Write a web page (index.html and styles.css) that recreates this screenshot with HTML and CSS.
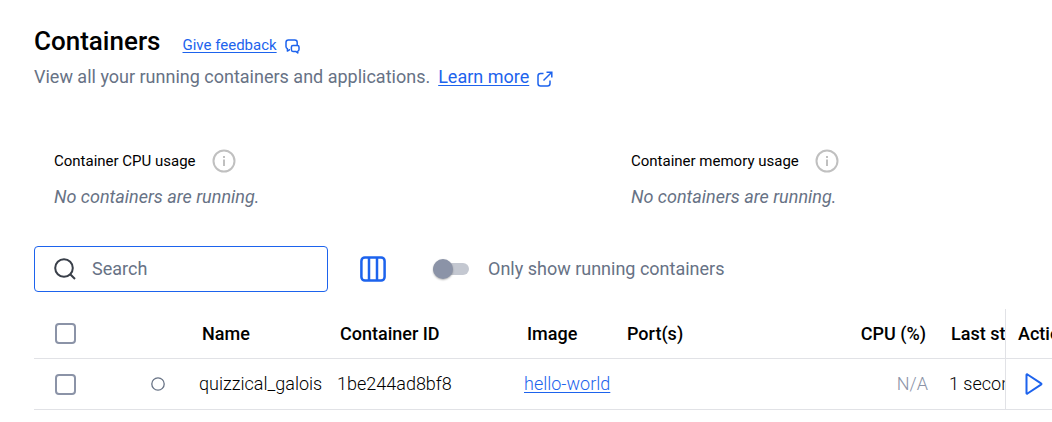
FILE: index.html
```html
<!DOCTYPE html>
<html lang="en">
<head>
  <meta charset="UTF-8">
  <title>Containers</title>
  <link rel="stylesheet" href="styles.css">
</head>
<body>

  <header class="page-header">
    <div class="title-row">
      <h1>Containers</h1>
      <a href="#" class="feedback">Give feedback</a>
      <svg class="feedback-icon" width="15" height="15" viewBox="0 0 15 15" fill="none" stroke="currentColor" stroke-width="1.5" stroke-linejoin="round">
        <path d="M5 10.8 H4.4 L2.4 12 V9.6 Q1 9 1 7.4 V3.4 Q1 1 3.4 1 H9.8 Q12.2 1 12.2 3.4 V6"/>
        <path d="M8 6.4 H12.4 Q14 6.4 14 8 V10.6 Q14 12 12.8 12.2 V14 L10.8 12.4 H8 Q6.4 12.4 6.4 10.8 V8 Q6.4 6.4 8 6.4 Z"/>
      </svg>
    </div>
    <p class="subtitle">
      View all your running containers and applications.
      <a href="#">Learn more</a>
      <svg class="external-icon" width="16" height="16" viewBox="0 0 16 16" fill="none" stroke="currentColor" stroke-width="1.5">
        <path d="M6.5 2.5 H3.5 Q1 2.5 1 5 V12.5 Q1 15 3.5 15 H10.5 Q13 15 13 12.5 V9.5"/>
        <path d="M6.5 9.5 L14.5 1.5 M9.5 1.2 H14.8 V6.5"/>
      </svg>
    </p>
  </header>

  <section class="usage">
    <div class="usage-item">
      <h2>Container CPU usage
        <svg width="24" height="24" viewBox="0 0 24 24" fill="none" stroke="currentColor" stroke-width="2">
          <circle cx="12" cy="12" r="10.5"/>
          <path d="M12 10.5 V17 M12 7 V9"/>
        </svg>
      </h2>
      <p>No containers are running.</p>
    </div>
    <div class="usage-item">
      <h2>Container memory usage
        <svg width="24" height="24" viewBox="0 0 24 24" fill="none" stroke="currentColor" stroke-width="2">
          <circle cx="12" cy="12" r="10.5"/>
          <path d="M12 10.5 V17 M12 7 V9"/>
        </svg>
      </h2>
      <p>No containers are running.</p>
    </div>
  </section>

  <div class="toolbar">
    <label class="search">
      <svg width="22" height="22" viewBox="0 0 22 22" fill="none" stroke="currentColor" stroke-width="2">
        <circle cx="10" cy="10" r="8.8"/>
        <path d="M16.2 16.2 L21 21"/>
      </svg>
      <input type="text" placeholder="Search" aria-label="Search">
    </label>
    <button class="columns-button" aria-label="Choose columns">
      <svg width="26" height="26" viewBox="0 0 26 26" fill="none" stroke="currentColor" stroke-width="2.5">
        <rect x="1.4" y="1.4" width="23.2" height="23.2" rx="3.5"/>
        <path d="M9 1.4 V24.6 M17 1.4 V24.6"/>
      </svg>
    </button>
    <label class="toggle">
      <input type="checkbox" role="switch">
      Only show running containers
    </label>
  </div>

  <div class="table-wrap">
    <table>
      <colgroup>
        <col class="col-check">
        <col class="col-status">
        <col class="col-name">
        <col class="col-id">
        <col class="col-image">
        <col class="col-ports">
        <col class="col-cpu">
        <col class="col-started">
        <col class="col-actions">
      </colgroup>
      <thead>
        <tr>
          <th class="check"><input type="checkbox" aria-label="Select all containers"></th>
          <th></th>
          <th>Name</th>
          <th>Container ID</th>
          <th>Image</th>
          <th>Port(s)</th>
          <th class="number">CPU (%)</th>
          <th class="started">Last started</th>
          <th class="actions">Actions</th>
        </tr>
      </thead>
      <tbody>
        <tr>
          <td class="check"><input type="checkbox" aria-label="Select quizzical_galois"></td>
          <td class="status">
            <svg width="14" height="14" viewBox="0 0 14 14" fill="none" stroke="currentColor" stroke-width="1.3">
              <circle cx="7" cy="7" r="6.2"/>
            </svg>
          </td>
          <td>quizzical_galois</td>
          <td>1be244ad8bf8</td>
          <td><a href="#">hello-world</a></td>
          <td></td>
          <td class="number muted">N/A</td>
          <td class="started">1 second ago</td>
          <td class="actions">
            <button aria-label="Start">
              <svg width="18" height="22" viewBox="0 0 18 22" fill="none" stroke="currentColor" stroke-width="2" stroke-linejoin="round">
                <path d="M1.5 2 Q1.5 1 2.5 1.5 L16 10.4 Q17 11 16 11.6 L2.5 20.5 Q1.5 21 1.5 20 Z"/>
              </svg>
            </button>
          </td>
        </tr>
      </tbody>
    </table>
  </div>

</body>
</html>
```
FILE: styles.css
```css
* {
  box-sizing: border-box;
}

body {
  margin: 0;
  padding: 24px 0 12px 34px;
  font-family: Roboto, Arial, sans-serif;
  font-size: 18px;
  line-height: 24px;
  color: #000;
  background-color: #fff;
  overflow-x: hidden;
}

h1, h2, p {
  margin: 0;
}

a {
  color: #1d63ed;
  text-underline-offset: 2px;
  text-decoration-thickness: 1px;
}

button {
  padding: 0;
  border: none;
  background: none;
  color: #1d63ed;
  cursor: pointer;
}

svg {
  display: block;
}

.title-row {
  display: flex;
  align-items: baseline;
}

h1 {
  margin-right: 22px;
  font-size: 26px;
  font-weight: 500;
  line-height: 34px;
}

.feedback {
  margin-right: 8px;
  font-size: 15px;
}

.feedback-icon {
  align-self: center;
  margin-top: 10px;
  color: #1d63ed;
}

.subtitle {
  display: flex;
  align-items: center;
  gap: 8px;
  margin-top: 7px;
  color: #677285;
}

.external-icon {
  margin-top: 4px;
  color: #1d63ed;
}

.usage {
  display: grid;
  grid-template-columns: 577px 1fr;
  margin-top: 60px;
  padding-left: 20px;
}

.usage h2 {
  display: flex;
  align-items: center;
  gap: 16px;
  font-size: 15px;
  font-weight: 400;
}

.usage svg {
  color: #c0c0c0;
}

.usage p {
  margin-top: 12px;
  font-style: italic;
  color: #677285;
}

.toolbar {
  display: flex;
  align-items: center;
  margin-top: 37px;
}

.search {
  display: flex;
  align-items: center;
  gap: 16px;
  width: 294px;
  height: 46px;
  padding: 0 19px;
  border: 1px solid #1d63ed;
  border-radius: 4px;
  color: #393f49;
}

.search input {
  flex: 1;
  min-width: 0;
  padding: 0;
  border: none;
  outline: none;
  font: inherit;
}

.search input::placeholder {
  color: #677285;
}

.columns-button {
  margin: 0 47px 0 32px;
}

.toggle {
  display: flex;
  align-items: center;
  gap: 19px;
  color: #677285;
}

.toggle input {
  appearance: none;
  display: flex;
  align-items: center;
  width: 36px;
  height: 12px;
  margin: 0;
  border-radius: 6px;
  background-color: #c4c8d1;
}

.toggle input::before {
  content: "";
  width: 20px;
  height: 20px;
  border-radius: 50%;
  background-color: #8b93a7;
  box-shadow: 0 1px 2px rgba(0, 0, 0, 0.3);
}

.table-wrap {
  margin-top: 17px;
  overflow: hidden;
}

table {
  width: 100%;
  table-layout: fixed;
  border-collapse: separate;
  border-spacing: 0;
}

.col-check { width: 100px; }
.col-status { width: 60px; }
.col-name { width: 138px; }
.col-id { width: 187px; }
.col-image { width: 100px; }
.col-cpu { width: 90px; }
.col-started { width: 65px; }
.col-actions { width: 47px; }

th, td {
  height: 50px;
  padding: 0 0 0 5px;
  border-bottom: 1px solid #e1e2e6;
  text-align: left;
  white-space: nowrap;
  overflow: hidden;
}

th {
  padding-left: 8px;
  font-weight: 500;
}

td {
  height: 51px;
  font-weight: 300;
}

th.number, td.number {
  padding: 0 12px 0 0;
  text-align: right;
}

th.number {
  padding-right: 14px;
}

th.started {
  padding-left: 11px;
}

td.started {
  padding-left: 9px;
}

.muted {
  color: #8b93a7;
}

th.check, td.check {
  padding-left: 21px;
}

.check input {
  appearance: none;
  display: block;
  width: 21px;
  height: 21px;
  margin: 0;
  border: 2px solid #8b93a7;
  border-radius: 4px;
}

td.status {
  padding-left: 17px;
  color: #677285;
}

th.actions, td.actions {
  padding-left: 12px;
  border-left: 1px solid #e1e2e6;
}

td.actions {
  padding-left: 19px;
}

.actions button {
  display: block;
}
```
